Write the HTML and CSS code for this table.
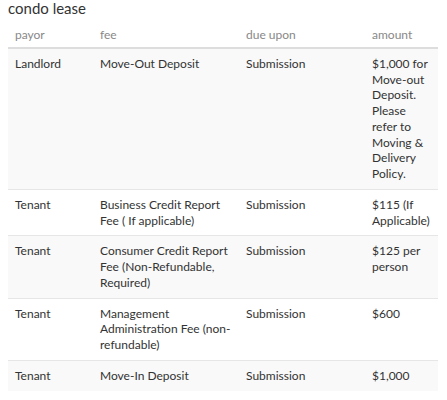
FILE: index.html
```html
<!DOCTYPE html>
<html lang="en">
<head>
    <meta charset="UTF-8">
    <meta name="viewport" content="width=device-width, initial-scale=1.0">
    <title>Condo Lease</title>
    <link rel="stylesheet" href="styles.css">
</head>
<body>
    <div class="fees">
        <h3>condo lease</h3>
        <table class="fee-table">
            <colgroup>
                <col class="col-payor">
                <col class="col-fee">
                <col class="col-due">
                <col class="col-amount">
            </colgroup>
            <thead>
                <tr>
                    <th>payor</th>
                    <th>fee</th>
                    <th>due upon</th>
                    <th>amount</th>
                </tr>
            </thead>
            <tbody>
                <tr>
                    <td>Landlord</td>
                    <td>Move-Out Deposit</td>
                    <td>Submission</td>
                    <td>$1,000 for Move-out Deposit. Please refer to Moving &amp; Delivery Policy.</td>
                </tr>
                <tr>
                    <td>Tenant</td>
                    <td>Business Credit Report Fee ( If applicable)</td>
                    <td>Submission</td>
                    <td>$115 (If Applicable)</td>
                </tr>
                <tr>
                    <td>Tenant</td>
                    <td>Consumer Credit Report Fee (Non-Refundable, Required)</td>
                    <td>Submission</td>
                    <td>$125 per person</td>
                </tr>
                <tr>
                    <td>Tenant</td>
                    <td>Management Administration Fee (non-refundable)</td>
                    <td>Submission</td>
                    <td>$600</td>
                </tr>
                <tr>
                    <td>Tenant</td>
                    <td>Move-In Deposit</td>
                    <td>Submission</td>
                    <td>$1,000</td>
                </tr>
            </tbody>
        </table>
    </div>
</body>
</html>
```

FILE: styles.css
```css
body {
    font-family: 'Lato', sans-serif;
    margin: 0;
    padding: 0 8px;
    color: #333;
    background-color: #ffffff;
}
.fees h3 {
    font-size: 15px;
    font-weight: normal;
    color: #333;
    margin: 0 0 4px 0;
    line-height: 16px;
}

/* Fee Table */
.fee-table {
    width: 430px;
    border-collapse: collapse;
    table-layout: fixed;
    font-size: 12px;
    line-height: 15.75px;
}
.col-payor { width: 85px; }
.col-fee { width: 146px; }
.col-due { width: 126px; }
.col-amount { width: 73px; }

.fee-table th {
    text-align: left;
    font-weight: normal;
    color: #888;
    padding: 7px 7px 4px 7px;
    border-bottom: 2px solid #ddd;
    vertical-align: bottom;
}
.fee-table td {
    padding: 7px;
    vertical-align: top;
    border-top: 1px solid #e6e6e6;
}
.fee-table tbody tr:first-child td {
    border-top: none;
}
.fee-table tbody tr:nth-child(odd) {
    background-color: #f9f9f9;
}
```
